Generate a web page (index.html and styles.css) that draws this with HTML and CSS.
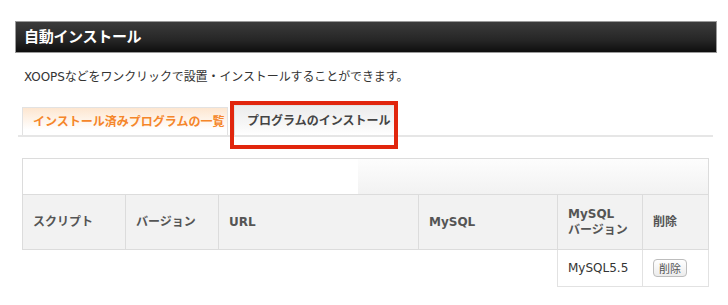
FILE: index.html
```html
<!DOCTYPE html>
<html lang="ja">
<head>
  <meta charset="UTF-8" />
  <title>自動インストール</title>
  <link rel="stylesheet" href="styles.css">
</head>
<body>

  <h1 class="title">自動インストール</h1>

  <p class="desc">XOOPSなどをワンクリックで設置・インストールすることができます。</p>

  <ul class="tabs">
    <li class="tab tab-active">インストール済みプログラムの一覧</li>
    <li class="tab tab-mark">プログラムのインストール</li>
  </ul>

  <table class="list">
    <colgroup>
      <col style="width:103px"><col style="width:93px"><col style="width:200px">
      <col style="width:139px"><col style="width:85px"><col style="width:66px">
    </colgroup>
    <tr class="bar-row">
      <td colspan="6"><div class="bar"><span class="bar-blank"></span><span class="bar-shade"></span></div></td>
    </tr>
    <tr class="head-row">
      <th>スクリプト</th>
      <th>バージョン</th>
      <th>URL</th>
      <th>MySQL</th>
      <th>MySQL<br>バージョン</th>
      <th>削除</th>
    </tr>
    <tr class="data-row">
      <td class="blank"></td>
      <td class="blank"></td>
      <td class="blank"></td>
      <td class="blank"></td>
      <td>MySQL5.5</td>
      <td><button class="del">削除</button></td>
    </tr>
  </table>

</body>
</html>
```

FILE: styles.css
```css
/* Reset & Base */
*, *::before, *::after { box-sizing: border-box; }
body {
  margin: 0;
  background: #fff;
  color: #333;
  font-family: "DejaVu Sans", "Noto Sans CJK JP", sans-serif;
  font-size: 12px;
}

/* Title bar */
.title {
  margin: 21px 11px 0 15px;
  height: 32px;
  padding-left: 8px;
  border: 1px solid #9a9a9a;
  background: linear-gradient(#3b3b3b, #262626 60%, #0e0e0e);
  color: #fff;
  font-size: 15px;
  font-weight: bold;
  line-height: 30px;
  letter-spacing: -0.3px;
}

.desc {
  margin: 16px 0 0 24px;
  font-size: 12px;
  line-height: 16px;
  letter-spacing: -0.1px;
}

/* Tabs */
.tabs {
  display: flex;
  align-items: flex-end;
  gap: 6px;
  list-style: none;
  margin: 22px 15px 0 18px;
  padding: 0 0 0 4px;
  height: 30px;
  border-bottom: 2px solid #e6e6e6;
}
.tab {
  position: relative;
  height: 28px;
  padding: 0 0 0 10px;
  border: 1px solid #e2e2e2;
  border-bottom: none;
  font-size: 12px;
  font-weight: bold;
  line-height: 28px;
  white-space: nowrap;
}
.tab-active {
  width: 206px;
  color: #f5862a;
  background: linear-gradient(#fde6d0, #fff 80%);
}
.tab-mark {
  width: 161px;
  height: 30px;
  padding-left: 12px;
  line-height: 30px;
  color: #444;
  background: linear-gradient(#ececec, #f8f8f8 70%, #fff);
}
.tab-mark::after {
  content: "";
  position: absolute;
  left: -5px;
  right: -4px;
  top: -5px;
  bottom: -14px;
  border: 4px solid #e1260d;
}

/* Table */
.list {
  margin: 21px 0 0 22px;
  width: 686px;
  border-collapse: collapse;
  table-layout: fixed;
}
.list td, .list th {
  padding: 0 10px;
  text-align: left;
}
.bar-row td {
  padding: 0;
  border: 1px solid #dcdcdc;
}
.bar {
  display: flex;
  height: 35px;
}
.bar-blank {
  width: 335px;
  background: #fff;
}
.bar-shade {
  flex: 1;
  background: linear-gradient(#fdfdfd, #f2f2f2);
}
.head-row th {
  height: 55px;
  background: #f2f2f2;
  border: 1px solid #dcdcdc;
  color: #555;
  font-size: 12px;
  font-weight: bold;
  line-height: 16px;
}
.data-row td {
  height: 37px;
  border: 1px solid #e2e2e2;
  font-size: 12px;
  color: #333;
}
.data-row td.blank {
  border: none;
}
.del {
  height: 18px;
  padding: 0 5px;
  border: 1px solid #bdbdbd;
  border-radius: 4px;
  background: linear-gradient(#fff, #ececec);
  color: #555;
  font-family: "Noto Sans CJK JP", sans-serif;
  font-size: 11px;
  line-height: 16px;
}
```
